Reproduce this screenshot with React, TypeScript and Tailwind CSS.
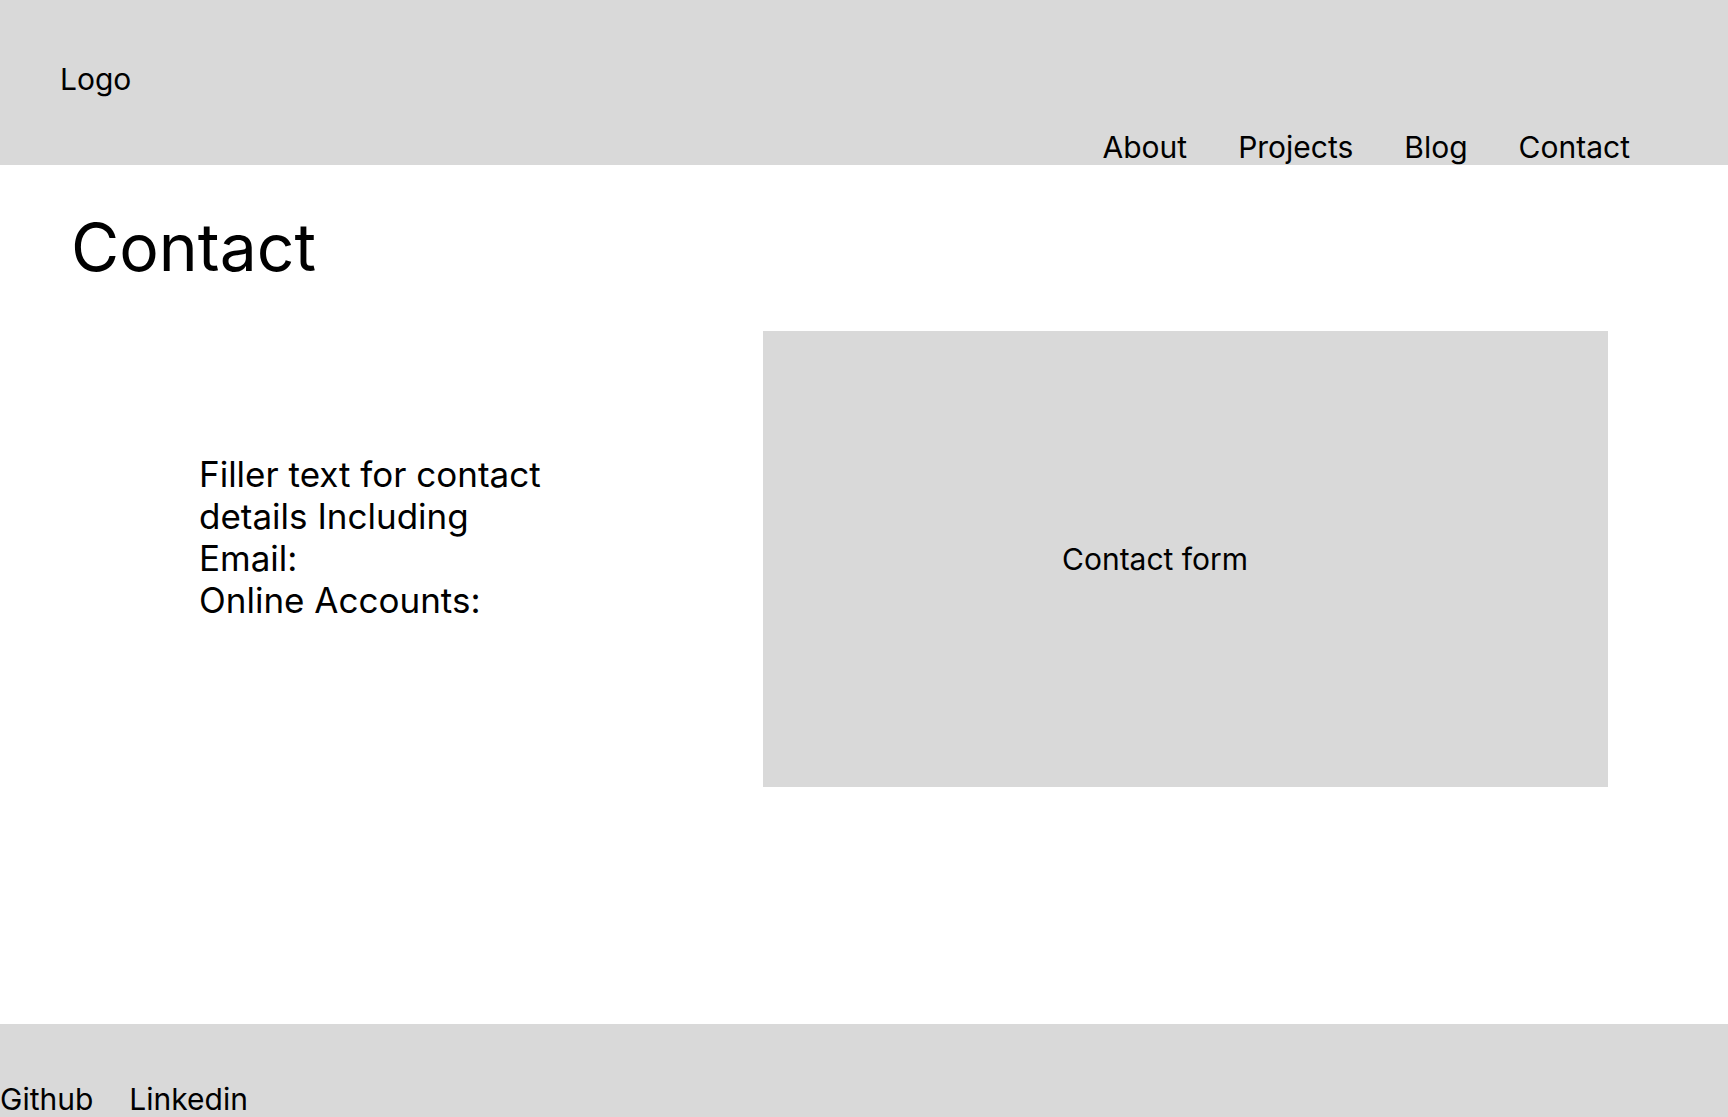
import React from "react";

export default function App() {
  return (
    <div className="flex min-h-screen w-full flex-col bg-white text-black [font-family:Inter,'Noto_Sans',sans-serif]">
      <header className="flex h-[165px] shrink-0 items-start justify-between bg-[#d9d9d9]">
        <div className="pl-[60px] pt-[61px] text-[30px] leading-[36px]">Logo</div>
        <nav className="flex h-full items-end gap-[51px] pr-[98px] text-[30px] leading-[36px]">
          <a className="block">About</a>
          <a className="block">Projects</a>
          <a className="block">Blog</a>
          <a className="block">Contact</a>
        </nav>
      </header>

      <main className="flex h-[859px] shrink-0 flex-col">
        <h1 className="pl-[71px] pt-[42px] text-[66px] font-normal leading-[80px]">Contact</h1>
        <div className="mt-[44px] flex items-start">
          <div className="w-[763px] shrink-0 pl-[199px] pt-[122px]">
            <p className="w-[370px] text-[35px] leading-[42px]">
              Filler text for contact details Including
              <br />
              Email:
              <br />
              Online Accounts:
            </p>
          </div>
          <div className="flex h-[456px] w-[845px] shrink-0 items-center bg-[#d9d9d9] pl-[299px] text-[30px] leading-[36px]">
            Contact form
          </div>
        </div>
      </main>

      <footer className="flex h-[93px] shrink-0 items-end gap-[36px] bg-[#d9d9d9] text-[30px] leading-[36px]">
        <a className="block">Github</a>
        <a className="block">Linkedin</a>
      </footer>
    </div>
  );
}
